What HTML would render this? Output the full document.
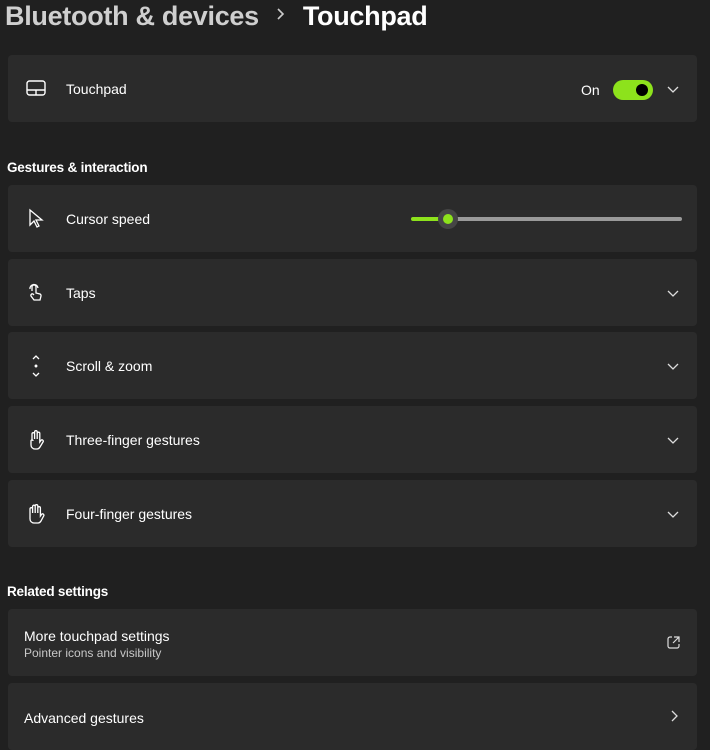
<!DOCTYPE html>
<html><head><style>
body{margin:0;width:710px;height:750px;background:#202020;font-family:"Liberation Sans",sans-serif;color:#fff;position:relative;overflow:hidden}
.h{position:absolute;left:5px;top:1px;font-size:27px;font-weight:bold;white-space:nowrap;letter-spacing:-0.3px}
.h .a{color:#cfcfcf}
.card{position:absolute;left:8px;width:689px;height:67px;background:#2b2b2b;border-radius:4px}
.t{position:absolute;left:58px;top:26px;font-size:14px}
.ic{position:absolute;left:18px;top:23px}
.chev{position:absolute;right:18px;top:28px}
.sec{position:absolute;left:7px;font-size:13.5px;font-weight:bold;letter-spacing:-0.2px}
</style></head><body>
<div class="h"><span class="a">Bluetooth &amp; devices</span><svg width="44" height="20" viewBox="0 0 44 20" style="vertical-align:1px"><path d="M19 5l5 5-5 5" fill="none" stroke="#ccc" stroke-width="1.6"/></svg><span>Touchpad</span></div>

<div class="card" style="top:55px">
<svg class="ic" width="20" height="20" viewBox="0 0 20 20" fill="none" stroke="#fff" stroke-width="1.4"><rect x="1" y="3" width="18" height="14" rx="2.5"/><path d="M1 12h18M10 12v5"/></svg>
<div class="t">Touchpad</div>
<div style="position:absolute;left:573px;top:27px;font-size:14px">On</div>
<div style="position:absolute;left:605px;top:25px;width:40px;height:20px;border-radius:10px;background:#8de21c"><div style="position:absolute;right:5px;top:4px;width:12px;height:12px;border-radius:6px;background:#000"></div></div>
<svg class="chev" width="12" height="12" viewBox="0 0 12 12" fill="none" stroke="#ddd" stroke-width="1.3"><path d="M1 4l5 5 5-5"/></svg>
</div>

<div class="sec" style="top:160px">Gestures &amp; interaction</div>

<div class="card" style="top:185px">
<svg class="ic" width="20" height="22" viewBox="0 0 20 22" fill="none" stroke="#fff" stroke-width="1.3"><path d="M4 2v15l4-4 3 6 2-1-3-6h6z"/></svg>
<div class="t">Cursor speed</div>
<div style="position:absolute;left:403px;top:32px;width:30px;height:4px;border-radius:2px;background:#8de21c"></div>
<div style="position:absolute;left:440px;top:32px;width:234px;height:4px;border-radius:2px;background:#9a9a9a"></div>
<div style="position:absolute;left:430px;top:24px;width:20px;height:20px;border-radius:10px;background:#454545"><div style="position:absolute;left:5px;top:5px;width:10px;height:10px;border-radius:5px;background:#8de21c"></div></div>
</div>

<div class="card" style="top:259px">
<svg class="ic" width="20" height="20" viewBox="0 0 20 20" fill="none" stroke="#fff" stroke-width="1.3"><path d="M6 9V5a2 2 0 014 0v6l4 1a2 2 0 011 2l-1 4H8l-3-4a1.5 1.5 0 012-2l1 1M4 7a4 4 0 018-1"/></svg>
<div class="t">Taps</div>
<svg class="chev" width="12" height="12" viewBox="0 0 12 12" fill="none" stroke="#ddd" stroke-width="1.3"><path d="M1 4l5 5 5-5"/></svg>
</div>

<div class="card" style="top:332px">
<svg class="ic" width="20" height="22" viewBox="0 0 20 22" fill="none" stroke="#fff" stroke-width="1.3"><path d="M7 4l3-3 3 3M7 18l3 3 3-3"/><circle cx="10" cy="11" r="0.8" fill="#fff"/></svg>
<div class="t">Scroll &amp; zoom</div>
<svg class="chev" width="12" height="12" viewBox="0 0 12 12" fill="none" stroke="#ddd" stroke-width="1.3"><path d="M1 4l5 5 5-5"/></svg>
</div>

<div class="card" style="top:406px">
<svg class="ic" width="20" height="22" viewBox="0 0 20 22" fill="none" stroke="#fff" stroke-width="1.3"><path d="M6 11V5a1.3 1.3 0 012.6 0V10M8.6 10V3a1.3 1.3 0 012.6 0v7M11.2 10V4.5a1.3 1.3 0 012.6 0V13l1.5-2a1.4 1.4 0 012 1.5L14 18a4 4 0 01-3 2H9a4 4 0 01-4-4v-4a1 1 0 012 0"/></svg>
<div class="t">Three-finger gestures</div>
<svg class="chev" width="12" height="12" viewBox="0 0 12 12" fill="none" stroke="#ddd" stroke-width="1.3"><path d="M1 4l5 5 5-5"/></svg>
</div>

<div class="card" style="top:480px">
<svg class="ic" width="20" height="22" viewBox="0 0 20 22" fill="none" stroke="#fff" stroke-width="1.3"><path d="M4 11V6a1.3 1.3 0 012.6 0v4M6.6 10V3.5a1.3 1.3 0 012.6 0V10M9.2 10V3a1.3 1.3 0 012.6 0v7M11.8 10V5a1.3 1.3 0 012.6 0V13l1.5-2a1.4 1.4 0 012 1.5L15 18a4 4 0 01-3 2H8a4 4 0 01-4-4v-5"/></svg>
<div class="t">Four-finger gestures</div>
<svg class="chev" width="12" height="12" viewBox="0 0 12 12" fill="none" stroke="#ddd" stroke-width="1.3"><path d="M1 4l5 5 5-5"/></svg>
</div>

<div class="sec" style="top:584px">Related settings</div>

<div class="card" style="top:609px">
<div style="position:absolute;left:16px;top:19px;font-size:14px">More touchpad settings</div>
<div style="position:absolute;left:16px;top:37px;font-size:12px;color:#c8c8c8">Pointer icons and visibility</div>
<svg style="position:absolute;right:17px;top:27px" width="13" height="13" viewBox="0 0 13 13" fill="none" stroke="#ddd" stroke-width="1.2"><path d="M5 1H3a2 2 0 00-2 2v7a2 2 0 002 2h7a2 2 0 002-2V8M7 1h5v5M12 1L6 7"/></svg>
</div>

<div class="card" style="top:683px">
<div style="position:absolute;left:16px;top:27px;font-size:14px">Advanced gestures</div>
<svg style="position:absolute;right:19px;top:27px" width="8" height="12" viewBox="0 0 8 12" fill="none" stroke="#ddd" stroke-width="1.3"><path d="M2 1l5 5-5 5"/></svg>
</div>
</body></html>
